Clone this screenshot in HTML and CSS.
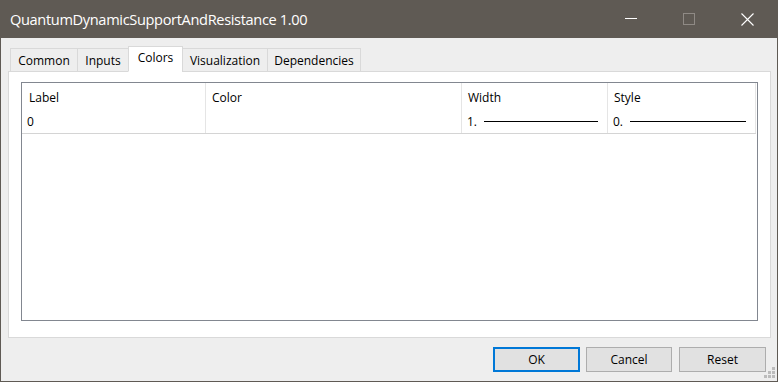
FILE: index.html
```html
<!DOCTYPE html>
<html lang="en">
<head>
  <meta charset="UTF-8" />
  <title>QuantumDynamicSupportAndResistance 1.00</title>
  <link rel="stylesheet" href="styles.css">
</head>
<body>

  <div class="window">

    <!-- title bar -->
    <div class="titlebar">
      <span class="title">QuantumDynamicSupportAndResistance 1.00</span>
      <div class="controls">
        <div class="ctl">
          <svg width="12" height="12" viewBox="0 0 12 12"><line x1="0" y1="5.5" x2="12" y2="5.5" stroke="#ffffff" stroke-width="1"/></svg>
        </div>
        <div class="ctl">
          <svg width="12" height="12" viewBox="0 0 12 12"><rect x="0.5" y="0.5" width="11" height="11" fill="none" stroke="#8f8a85" stroke-width="1"/></svg>
        </div>
        <div class="ctl">
          <svg width="13" height="13" viewBox="0 0 13 13"><path d="M0.5 0.5 L12.5 12.5 M12.5 0.5 L0.5 12.5" stroke="#ffffff" stroke-width="1.1" fill="none"/></svg>
        </div>
      </div>
    </div>

    <div class="content">
      <div class="tabs">
        <div class="tab tab-common">Common</div>
        <div class="tab tab-inputs">Inputs</div>
        <div class="tab tab-colors active">Colors</div>
        <div class="tab tab-vis">Visualization</div>
        <div class="tab tab-deps">Dependencies</div>
      </div>

      <div class="panel">
        <div class="list">
          <div class="list-head">
            <div class="cell head">Label</div>
            <div class="cell head">Color</div>
            <div class="cell head">Width</div>
            <div class="cell head">Style</div>
          </div>
          <div class="list-row">
            <div class="cell">0</div>
            <div class="cell"></div>
            <div class="cell"><span>1.</span><span class="line-sample"></span></div>
            <div class="cell"><span>0.</span><span class="line-sample"></span></div>
          </div>
        </div>
      </div>

      <div class="buttons">
        <button class="btn default">OK</button>
        <button class="btn btn-cancel">Cancel</button>
        <button class="btn">Reset</button>
      </div>

      <!-- size grip -->
      <svg class="grip" width="12" height="12" viewBox="0 0 12 12">
        <rect x="8" y="0" width="3" height="3" fill="#bcbcbc"/>
        <rect x="4" y="4" width="3" height="3" fill="#bcbcbc"/>
        <rect x="8" y="4" width="3" height="3" fill="#bcbcbc"/>
        <rect x="0" y="8" width="3" height="3" fill="#bcbcbc"/>
        <rect x="4" y="8" width="3" height="3" fill="#bcbcbc"/>
        <rect x="8" y="8" width="3" height="3" fill="#bcbcbc"/>
      </svg>
    </div>

  </div>

</body>
</html>
```

FILE: styles.css
```css
body {
  margin: 0;
  padding: 0;
  font-family: "Open Sans", "Noto Sans", sans-serif;
  font-size: 12px;
  color: #000;
  background: #f0f0f0;
  overflow: hidden;
}
.window {
  width: 778px;
  height: 382px;
  box-sizing: border-box;
  border: 1px solid #5f5a54;
  border-top: none;
  background: #eeeeee;
  display: flex;
  flex-direction: column;
}
.titlebar {
  height: 38px;
  flex: none;
  background: #5f5a54;
  display: flex;
  align-items: center;
  margin: 0 -1px;
}
.title {
  margin-left: 10px;
  margin-top: -1px;
  color: #ffffff;
  font-size: 14.6px;
  letter-spacing: -0.35px;
}
.controls {
  margin-left: auto;
  margin-right: 2px;
  display: flex;
  height: 100%;
}
.ctl {
  width: 58px;
  display: flex;
  align-items: center;
  justify-content: center;
}
.content {
  flex: 1;
  position: relative;
  display: flex;
  flex-direction: column;
}
.tabs {
  display: flex;
  align-items: flex-end;
  height: 26px;
  margin: 8px 0 0 9px;
  position: relative;
  z-index: 1;
}
.tab {
  box-sizing: border-box;
  height: 24px;
  border: 1px solid #d9d9d9;
  background: #eeeeee;
  margin-left: -1px;
  display: flex;
  align-items: center;
  justify-content: center;
  padding-top: 1px;
}
.tab:first-child {
  margin-left: 0;
}
.tab.active {
  height: 26px;
  background: #ffffff;
  border-bottom-color: #ffffff;
  padding-top: 0;
  padding-bottom: 3px;
}
.tab-common { width: 68px; }
.tab-inputs { width: 52px; }
.tab-colors { width: 55px; }
.tab-vis { width: 86px; }
.tab-deps { width: 94px; }
.panel {
  height: 267px;
  box-sizing: border-box;
  margin: -1px 6px 0 7px;
  border: 1px solid #d9d9d9;
  background: #ffffff;
  padding: 10px 12px 0 12px;
}
.list {
  height: 239px;
  box-sizing: border-box;
  border: 1px solid #828790;
  background: #ffffff;
}
.list-head, .list-row {
  display: grid;
  grid-template-columns: 184px 256px 146px 148px;
  height: 25px;
}
.list-row {
  height: 26px;
  box-sizing: border-box;
  border-bottom: 1px solid #d4d4d4;
  width: 734px;
}
.cell {
  box-sizing: border-box;
  border-right: 1px solid #e5e5e5;
  display: flex;
  align-items: center;
  padding-left: 5px;
  padding-top: 1px;
}
.cell.head {
  padding-left: 6px;
  padding-top: 4px;
}
.cell.head:first-child {
  padding-left: 7px;
}
.line-sample {
  flex: 1;
  height: 1px;
  background: #000;
  margin: 1px 9px 0 7px;
}
.buttons {
  display: flex;
  justify-content: flex-end;
  margin: 9px 11px 0 0;
}
.btn {
  width: 87px;
  height: 25px;
  box-sizing: border-box;
  border: 1px solid #adadad;
  background: #e1e1e1;
  font-family: "Open Sans", "Noto Sans", sans-serif;
  font-size: 12px;
  color: #000;
  padding: 0;
  margin: 0;
}
.btn-cancel {
  width: 86px;
  margin: 0 7px 0 6px;
}
.btn.default {
  border: 2px solid #0078d7;
}
.grip {
  position: absolute;
  right: 1px;
  bottom: 2px;
}
```
